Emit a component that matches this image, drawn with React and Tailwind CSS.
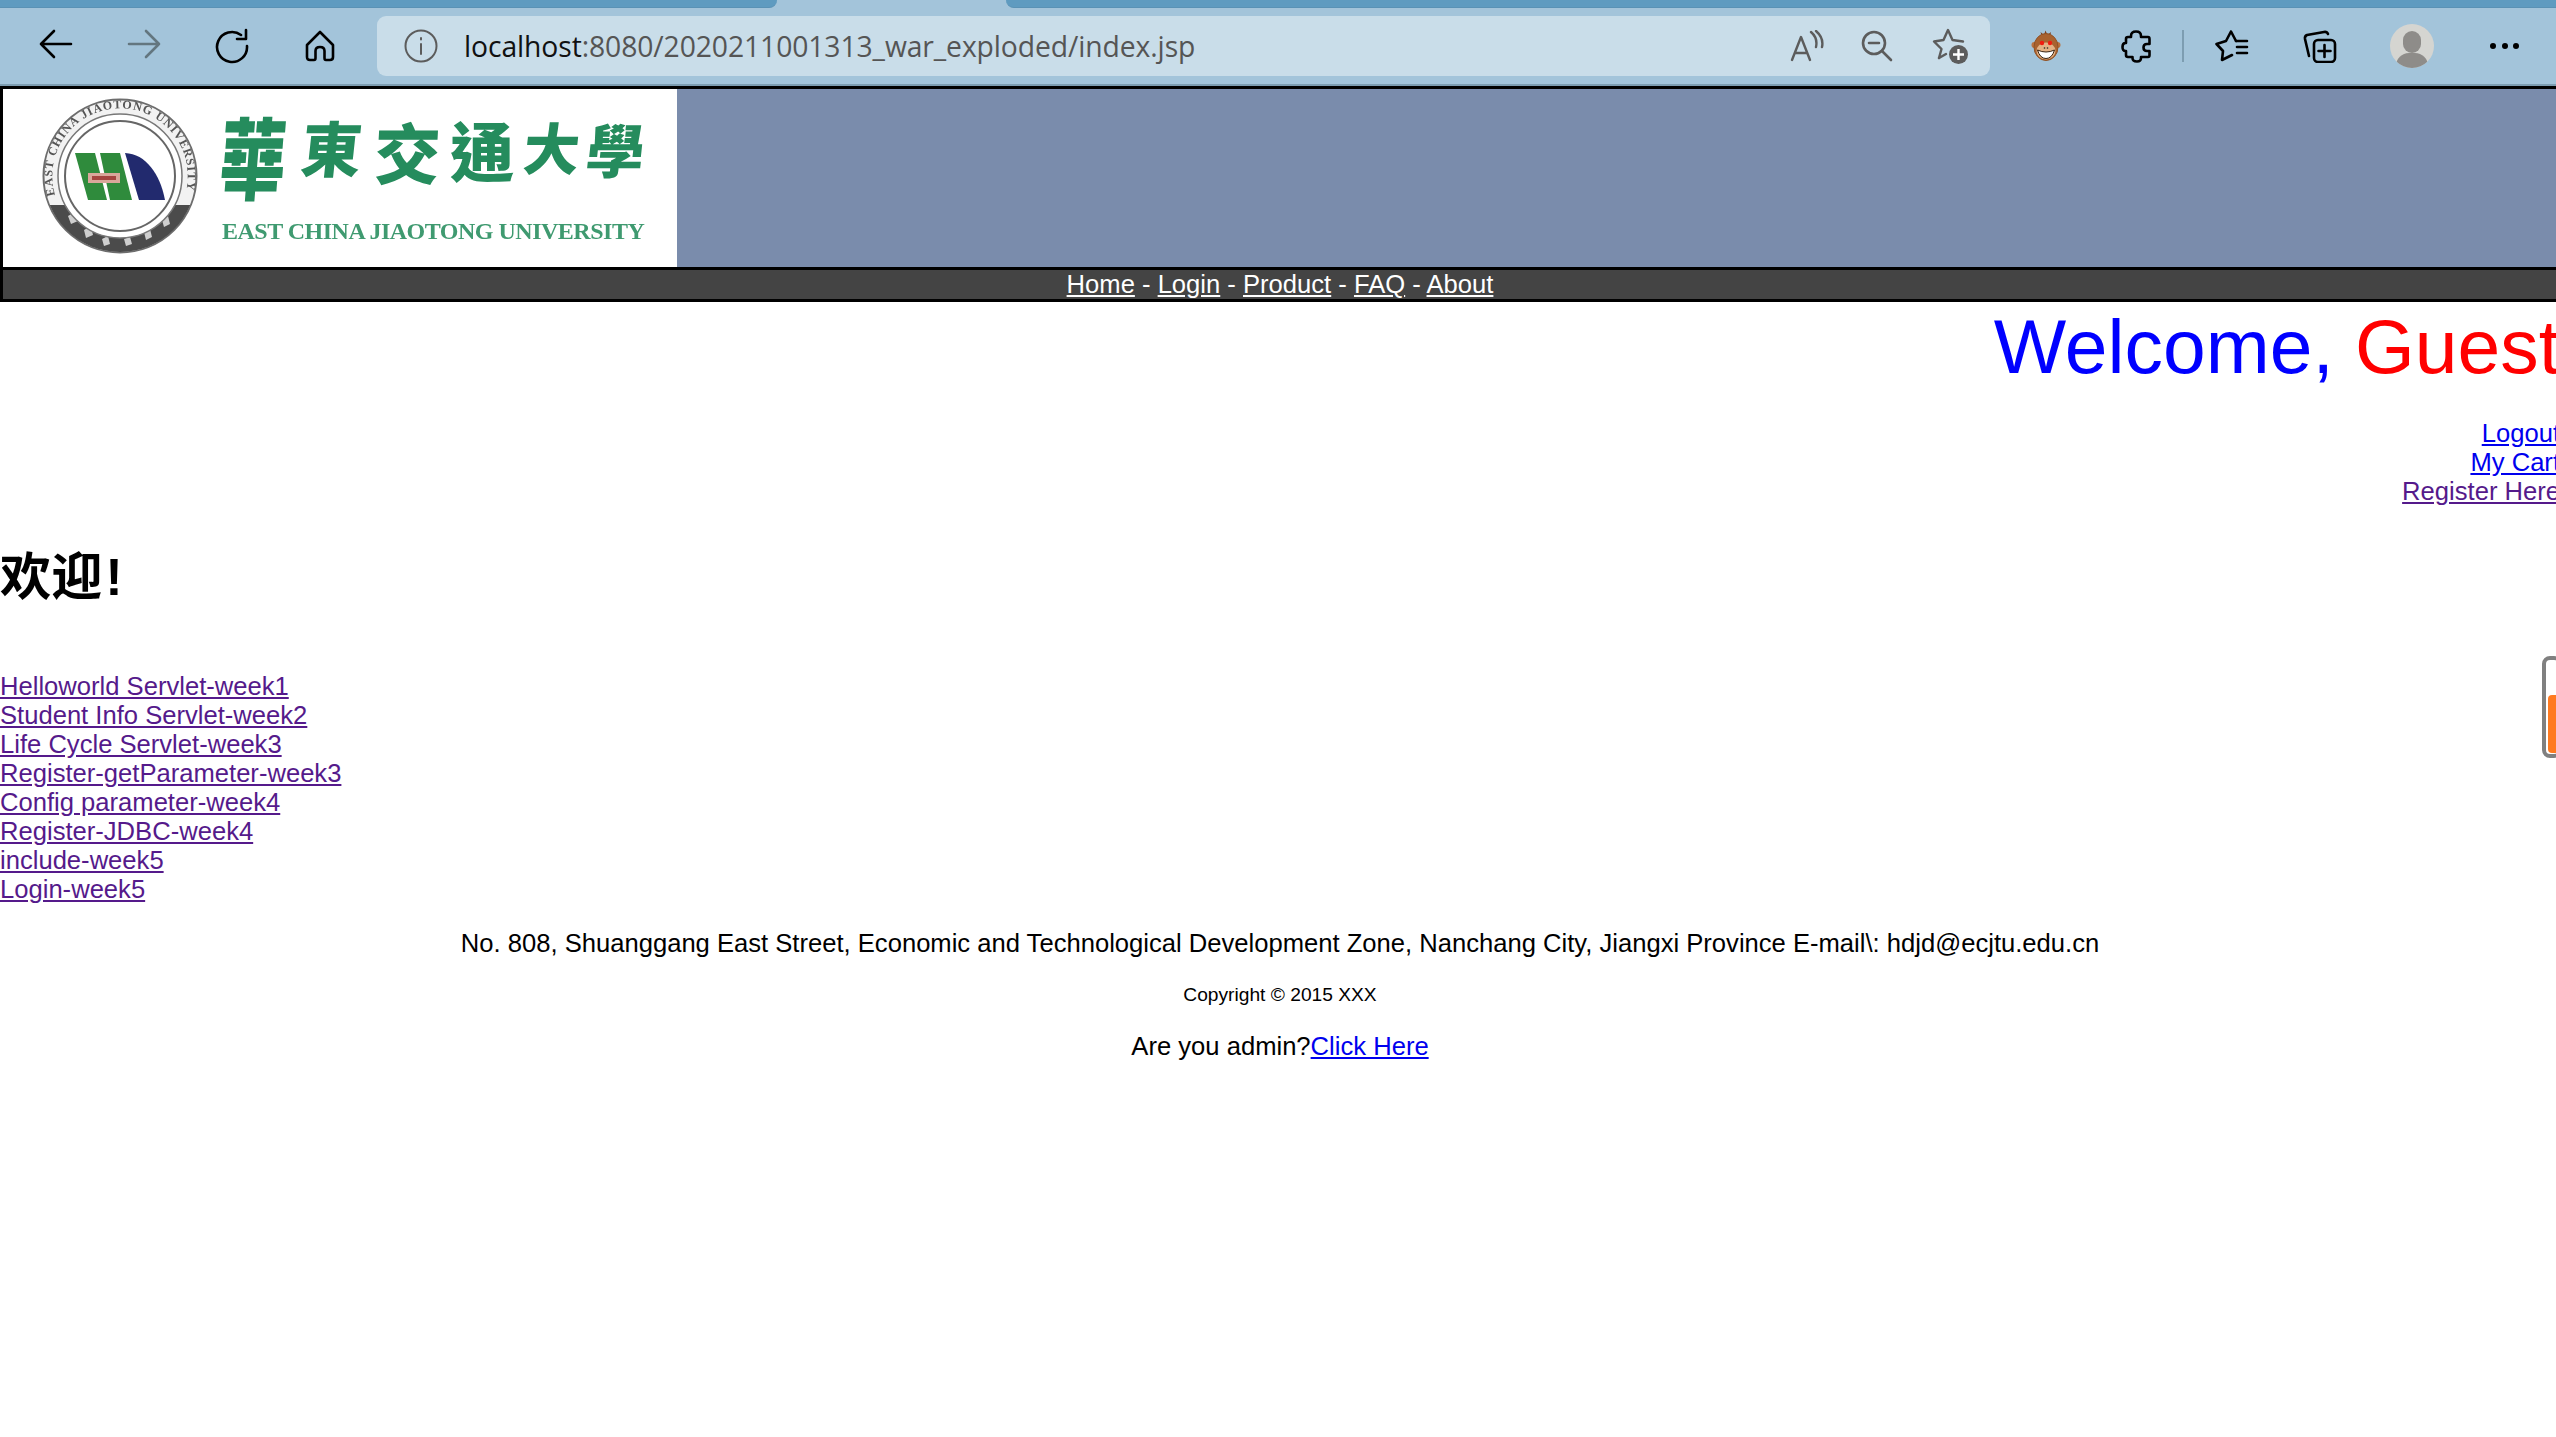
import React from "react";

const COURSE_LINKS = [
  "Helloworld Servlet-week1",
  "Student Info Servlet-week2",
  "Life Cycle Servlet-week3",
  "Register-getParameter-week3",
  "Config parameter-week4",
  "Register-JDBC-week4",
  "include-week5",
  "Login-week5",
];

const NAV = ["Home", "Login", "Product", "FAQ", "About"];

/* ── TOOLBAR ICONS ── */
const Icon = ({ w = 36, h = 36, color = "#000", sw = 2.6, children }) => (
  <svg width={w} height={h} viewBox={`0 0 ${w} ${h}`} fill="none" stroke={color} strokeWidth={sw} strokeLinecap="round" strokeLinejoin="round">
    {children}
  </svg>
);

const Slot = ({ children, className = "w-[88px]" }) => (
  <div className={`flex items-center justify-center h-[44px] shrink-0 ${className}`}>{children}</div>
);

const Monkey = () => (
  <svg width="30" height="34" viewBox="0 0 30 32">
    <path d="M11 7 L9.500 2 L13 5 L14.500 0.500 L16.500 5 L20 2 L19 7 Z" fill="#7a3f1c" />
    <circle cx="3.500" cy="15" r="3" fill="#b9713f" />
    <circle cx="26.500" cy="15" r="3" fill="#b9713f" />
    <ellipse cx="15" cy="17" rx="12" ry="13.500" fill="#a9622f" stroke="#8f5226" strokeWidth="1" />
    <ellipse cx="15" cy="21" rx="9.500" ry="8.500" fill="#e3b184" />
    <circle cx="11" cy="13" r="2.200" fill="#f01c10" />
    <circle cx="19" cy="13" r="2.200" fill="#f01c10" />
    <circle cx="13.500" cy="18" r="0.800" fill="#222" />
    <circle cx="16.500" cy="18" r="0.800" fill="#222" />
    <path d="M6.500 20 Q15 24 23.500 20 Q21 28.500 15 28.500 Q9 28.500 6.500 20 Z" fill="#fff" stroke="#3a2412" strokeWidth="1" />
  </svg>
);

const Seal = () => (
  <svg width="156" height="156" viewBox="0 0 156 156" className="shrink-0 blur-[0.6px]">
    <defs>
      <path id="ringText" d="M 13 97 A 67.700 67.700 0 1 1 143 97" />
      <clipPath id="bandClip">
        <rect x="0" y="107" width="156" height="49" />
      </clipPath>
    </defs>
    <circle cx="78" cy="78" r="76.500" fill="#f2f2f2" stroke="#6d6d6d" strokeWidth="2" />
    <circle cx="78" cy="78" r="76" fill="#4b4b4b" clipPath="url(#bandClip)" />
    <text fontFamily="Liberation Serif, serif" fontSize="12" fontWeight="700" fill="#555">
      <textPath href="#ringText" textLength="245">EAST CHINA JIAOTONG UNIVERSITY</textPath>
    </text>
    <g fill="#cfcfcf">
      <path d="M26 118 l7 -4 l3 9 l-7 3 Z" />
      <path d="M42 132 l7 -4 l2 9 l-7 3 Z" />
      <path d="M60 141 l6 -3 l2 8 l-6 2 Z" />
      <path d="M82 141 l6 -2 l2 7 l-6 2 Z" />
      <path d="M102 134 l6 -3 l2 8 l-6 3 Z" />
      <path d="M120 122 l6 -4 l2 8 l-6 3 Z" />
    </g>
    <circle cx="78" cy="78" r="62" fill="#fff" stroke="#777" strokeWidth="1.500" />
    <circle cx="78" cy="78" r="55" fill="#fff" stroke="#666" strokeWidth="2" />
    <path d="M33 55 H53 L65 102 H46 Z" fill="#2f8b3c" />
    <path d="M58 55 H78 L90 102 H68 Z" fill="#2f8b3c" />
    <path d="M83 55 C104 56 118 76 123 102 H97 Z" fill="#222a6e" />
    <rect x="46" y="75" width="32" height="10" fill="#d9a79a" />
    <rect x="50" y="78" width="24" height="4" fill="#a5453f" />
  </svg>
);

/* calligraphic title is kept as live text, each glyph nudged to the picture */
const TITLE = [
  { ch: "華", cls: "w-[81px] text-[66px] -skew-x-6 scale-y-[1.35]" },
  { ch: "東", cls: "w-[76px] text-[60px] -skew-x-6 -translate-y-[8px]" },
  { ch: "交", cls: "w-[75px] text-[66px] -skew-x-3 -translate-y-[4px]" },
  { ch: "通", cls: "w-[74px] text-[64px] -translate-y-[6px]" },
  { ch: "大", cls: "w-[66px] text-[56px] -skew-x-6 -translate-y-[8px]" },
  { ch: "學", cls: "w-[62px] text-[58px] -skew-x-6 -translate-y-[6px]" },
];

export default function App() {
  return (
    <div className="w-[2556px] min-h-screen overflow-hidden bg-white text-black font-['Liberation_Sans','Noto_Sans_CJK_SC',sans-serif]">

      {/* ══════════ BROWSER CHROME ══════════ */}
      <div className="relative h-[86px] bg-[#a3c4da] border-b-2 border-[#7d9db1]">
        {/* tab strip: the active tab is the gap between the two dark pieces */}
        <div className="flex h-[8px]">
          <div className="w-[777px] bg-[#5f9bc0] rounded-br-[8px] border-b border-[#5a92b5]" />
          <div className="w-[229px]" />
          <div className="flex-1 bg-[#5f9bc0] rounded-bl-[8px] border-b border-[#5a92b5]" />
        </div>

        <div className="flex items-center pl-[12px] h-[60px] mt-[8px]">
          <Slot><Icon><path d="M33 16 H3 M16 3 L3 16 L16 29" /></Icon></Slot>
          <Slot><Icon color="#63767f"><path d="M3 16 H33 M20 3 L33 16 L20 29" /></Icon></Slot>
          <Slot>
            <Icon><path d="M27 7 A15 15 0 1 0 33 18" /><path d="M32 2 V11 H23" /></Icon>
          </Slot>
          <Slot>
            <Icon w={30} h={32}><path d="M15 2 L28 15 V27 Q28 30 25 30 H21 Q19.500 30 19.500 28 V21 Q19.500 17 15 17 Q10.500 17 10.500 21 V28 Q10.500 30 9 30 H5 Q2 30 2 27 V15 Z" /></Icon>
          </Slot>

          {/* Address bar */}
          <div className="flex items-center w-[1613px] h-[60px] ml-[13px] pl-[27px] pr-[3px] bg-[#c9dde9] rounded-[9px] shrink-0">
            <Icon w={34} h={34} color="#5c5c5c" sw={2}>
              <circle cx="17" cy="17" r="15.500" />
              <path d="M17 15 V25 M17 9 V10.500" />
            </Icon>
            <div className="ml-[26px] text-[28.300px] tracking-[-0.1px] font-['Open_Sans',sans-serif] text-[#555] whitespace-nowrap">
              <span className="text-[#111]">localhost</span>:8080/2020211001313_war_exploded/index.jsp
            </div>
            <div className="flex ml-auto">
              <Slot className="w-[68px]">
                <Icon w={36} h={32} color="#5c5c5c" sw={2.400}>
                  <path d="M3 30 L12 7 L21 30 M6 23 H18" />
                  <path d="M22 2 Q29 8 27 17 M27 1 Q35 8 33 17" />
                </Icon>
              </Slot>
              <Slot className="w-[72px]">
                <Icon w={32} h={32} color="#5c5c5c" sw={2.600}>
                  <circle cx="13" cy="13" r="11" />
                  <path d="M8 13 H18 M21 21 L30 30" />
                </Icon>
              </Slot>
              <Slot className="w-[74px]">
                <div className="relative w-[36px] h-[36px]">
                  <Icon w={34} h={34} color="#5c5c5c" sw={2.400}>
                    <path d="M7 30 L9.500 21 L2 13.500 L11.500 12 L16 2 L20.500 12 L31 13.500" />
                    <path d="M7 30 L14 26" />
                  </Icon>
                  <div className="absolute left-[17px] top-[17px] w-[19px] h-[19px] rounded-full bg-[#5c5c5c] flex items-center justify-center">
                    <svg width="11" height="11" viewBox="0 0 11 11" stroke="#fff" strokeWidth="2.400"><path d="M5.500 0 V11 M0 5.500 H11" /></svg>
                  </div>
                </div>
              </Slot>
            </div>
          </div>

          {/* Right side buttons */}
          <Slot className="w-[88px] ml-[12px]"><Monkey /></Slot>
          <Slot className="w-[92px]">
            <Icon w={30} h={33}>
              <path d="M10 6 Q10 1.500 15 1.500 Q20 1.500 20 6 V7 H27 Q28.500 7 28.500 9 V14 H26 Q22.500 14 22.500 17.500 Q22.500 21 26 21 H28.500 V25 Q28.500 27 27 27 H20 V28 Q20 31.500 16 31.500 Q11.500 31.500 11.500 28 V27 H7 Q5 27 5 25 V21 H4.500 Q1.500 21 1.500 17 Q1.500 13 4.500 13 H5 V9 Q5 7 7 7 H10 Z" />
            </Icon>
          </Slot>
          <div className="w-[2px] h-[32px] bg-[#7d9db1] shrink-0" />
          <Slot className="w-[96px]">
            <Icon w={34} h={32}>
              <path d="M21 11 L16 1.500 L11 11 L1.500 14 L8 21 L7 30 L17 25" />
              <path d="M21 11 H32 M22 17 H32 M22 23 H32" />
            </Icon>
          </Slot>
          <Slot className="w-[80px]">
            <Icon w={34} h={33}>
              <path d="M6 26 L2 9 Q1.500 6 4 5 L21 2 Q24 1.500 25 4" />
              <rect x="11" y="10" width="21" height="22" rx="4" />
              <path d="M21.500 15 V27 M15.500 21 H27.500" />
            </Icon>
          </Slot>
          <div className="w-[44px] h-[44px] rounded-full bg-[#d5d5d1] ml-[30px] overflow-hidden relative shrink-0">
            <div className="absolute left-[13px] top-[7px] w-[18px] h-[22px] rounded-full bg-[#8e8c89]" />
            <div className="absolute left-[6px] top-[29px] w-[32px] h-[26px] rounded-full bg-[#8e8c89]" />
          </div>
          <div className="flex gap-[5.500px] ml-[56px]">
            <span className="w-[6px] h-[6px] rounded-full bg-black" />
            <span className="w-[6px] h-[6px] rounded-full bg-black" />
            <span className="w-[6px] h-[6px] rounded-full bg-black" />
          </div>
        </div>
      </div>

      {/* ══════════ PAGE ══════════ */}
      <div className="relative w-[2560px] text-[25.600px] leading-[29px]">

        {/* Header */}
        <div className="border-[3px] border-b-0 border-black bg-[#7a8cac] h-[181px]">
          <div className="flex items-start w-[674px] h-[178px] bg-white">
            <div className="ml-[39px] mt-[9px]"><Seal /></div>
            <div className="ml-[24px] mt-[11px] flex flex-col blur-[0.5px]">
              <div className="flex items-center -ml-[9px] h-[108px] text-[#258c5d] font-black leading-none font-['Noto_Sans_CJK_TC',sans-serif]">
                {TITLE.map((t) => (
                  <span key={t.ch} className={`inline-block text-center ${t.cls}`}>{t.ch}</span>
                ))}
              </div>
              <div className="mt-[10px] font-['Liberation_Serif',serif] font-bold text-[24px] leading-[26px] tracking-[-0.5px] whitespace-nowrap text-[#3f9a70]">
                EAST CHINA JIAOTONG UNIVERSITY
              </div>
            </div>
          </div>
        </div>

        {/* Nav */}
        <div className="h-[35px] bg-[#444444] border-[3px] border-black text-white text-center leading-[29px]">
          {NAV.map((n, i) => (
            <span key={n}>
              {i > 0 && " - "}
              <a href="#" className="underline">{n}</a>
            </span>
          ))}
        </div>

        {/* Welcome block */}
        <div className="text-right">
          <div className="text-[76.800px] leading-[88px] text-[#0000ff]">
            Welcome, <span className="text-[#ff0000]">Guest</span>
          </div>
          <div className="mt-[29px] flex flex-col">
            <a href="#" className="underline text-[#0000ee]">Logout</a>
            <a href="#" className="underline text-[#0000ee]">My Cart</a>
            <a href="#" className="underline text-[#551a8b]">Register Here</a>
          </div>
        </div>

        <h1 className="mt-[35px] font-bold text-[51.200px] leading-[74px]">欢迎<span className="ml-[3px]">!</span></h1>

        <div className="mt-[57px] flex flex-col items-start text-[#551a8b]">
          {COURSE_LINKS.map((l) => (
            <a key={l} href="#" className="underline">{l}</a>
          ))}
        </div>

        {/* Footer */}
        <div className="text-center">
          <p className="mt-[25px]">No. 808, Shuanggang East Street, Economic and Technological Development Zone, Nanchang City, Jiangxi Province E-mail\: hdjd@ecjtu.edu.cn</p>
          <p className="mt-[26px] text-[19.200px] leading-[22px]">Copyright © 2015 XXX</p>
          <p className="mt-[26px]">Are you admin?<a href="#" className="underline text-[#0000ee]">Click Here</a></p>
        </div>
      </div>

      {/* floating side widget over the page edge */}
      <div className="absolute left-[2542px] top-[656px] w-[20px] h-[102px] rounded-[8px] border-[4px] border-[#808080] bg-white">
        <div className="absolute left-[2px] top-[35px] w-[12px] h-[58px] rounded-[4px] bg-[#ff7a20]" />
      </div>
    </div>
  );
}
